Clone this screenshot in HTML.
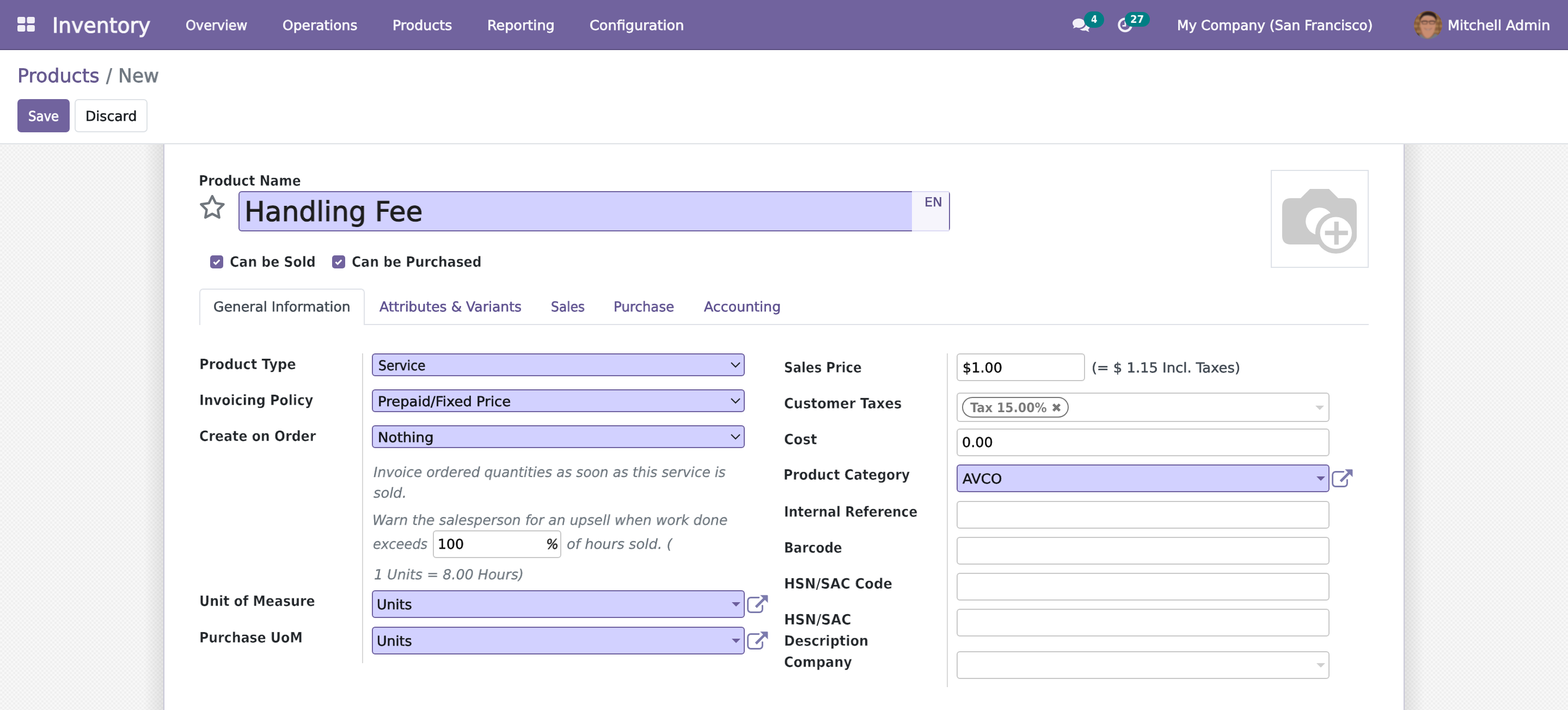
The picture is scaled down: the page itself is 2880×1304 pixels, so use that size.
<!DOCTYPE html>
<html lang="en">
<head>
<meta charset="utf-8">
<title>Odoo - Products / New</title>
<style>
*{box-sizing:border-box;margin:0;padding:0}
html,body{width:2880px;height:1304px;overflow:hidden;background:#fff}
body{font-family:"DejaVu Sans","Liberation Sans",sans-serif;font-size:26px;color:#212529;position:relative}
.a{position:absolute;white-space:pre}
.t{transform-origin:0 0;will-change:transform;text-rendering:geometricPrecision}
svg{position:absolute;overflow:visible}

#nav{left:0;top:0;width:2880px;height:92px;background:#71639e;border-bottom:2px solid #5c5082}
#cp{left:0;top:92px;width:2880px;height:173px;background:#fff;border-bottom:2px solid #dfe2e6}
#bg{left:0;top:265px;width:2880px;height:1039px;background:#f9f9f9;overflow:hidden}
#sheet{left:300px;top:265px;width:2280px;height:1039px;background:#fff;border-left:2px solid #c9c8d8;border-right:2px solid #c9c8d8}
.inp{border:2px solid #c8c8c8;border-radius:6px;background:#fff}
.req{border:2px solid #6f62a0;border-radius:6px;background:#d2d1ff}
.sep{width:2px;background:#d6d6d6}
.cb{width:24px;height:24px;border-radius:5px;background:#71639e}

</style>
</head>
<body>
<div id="nav" class="a"></div>
<div id="cp" class="a"></div>
<div id="bg" class="a"><svg style="left:0;top:0" width="2880" height="1039"><defs><pattern id="chk" width="8" height="8" patternUnits="userSpaceOnUse" x="0" y="1"><rect width="8" height="8" fill="#fcfcfc"/><rect width="4" height="4" fill="#ebebeb"/><rect x="4" y="4" width="4" height="4" fill="#ebebeb"/></pattern><filter id="chb" x="0" y="0" width="100%" height="100%"><feGaussianBlur stdDeviation="0.900"/></filter><linearGradient id="shl" x1="0" x2="1" y1="0" y2="0"><stop offset="0" stop-color="#000" stop-opacity="0"/><stop offset="0.880" stop-color="#000" stop-opacity="0"/><stop offset="1" stop-color="#000" stop-opacity="0.085"/></linearGradient><linearGradient id="shr" x1="1" x2="0" y1="0" y2="0"><stop offset="0" stop-color="#000" stop-opacity="0"/><stop offset="0.880" stop-color="#000" stop-opacity="0"/><stop offset="1" stop-color="#000" stop-opacity="0.085"/></linearGradient></defs><g filter="url(#chb)"><rect x="-8" y="-8" width="316" height="1060" fill="url(#chk)"/><rect x="2572" y="-8" width="316" height="1060" fill="url(#chk)"/></g><rect x="0" y="0" width="300" height="1039" fill="url(#shl)"/><rect x="2580" y="0" width="300" height="1039" fill="url(#shr)"/></svg></div>
<div id="sheet" class="a"></div>
<svg style="left:32px;top:31px" width="32" height="27" viewBox="0 0 32 27"><g fill="#f1eff7"><rect x="0" y="0" width="14.4" height="12" rx="3"/><rect x="17.5" y="0" width="14.4" height="12" rx="3"/><rect x="0" y="15" width="14.4" height="12" rx="3"/><rect x="17.5" y="15" width="14.4" height="12" rx="3"/></g></svg>
<div class="a t" style="left:96.38px;top:23.25px;font-size:38.25px;line-height:50px;color:rgba(255,255,255,.92);transform:scaleX(0.9875);-webkit-text-stroke:1.1px rgba(255,255,255,.92);">Inventory</div>
<div class="a t" style="left:340.72px;top:30.90px;font-size:24.75px;line-height:32px;color:rgba(255,255,255,.92);transform:scaleX(0.9717);-webkit-text-stroke:0.8px rgba(255,255,255,.92);">Overview</div>
<div class="a t" style="left:518.99px;top:30.90px;font-size:24.75px;line-height:32px;color:rgba(255,255,255,.92);transform:scaleX(1.0099);-webkit-text-stroke:0.8px rgba(255,255,255,.92);">Operations</div>
<div class="a t" style="left:720.86px;top:30.90px;font-size:24.75px;line-height:32px;color:rgba(255,255,255,.92);transform:scaleX(1.0232);-webkit-text-stroke:0.8px rgba(255,255,255,.92);">Products</div>
<div class="a t" style="left:894.66px;top:30.90px;font-size:24.75px;line-height:32px;color:rgba(255,255,255,.92);transform:scaleX(1.0280);-webkit-text-stroke:0.8px rgba(255,255,255,.92);">Reporting</div>
<div class="a t" style="left:1082.98px;top:30.90px;font-size:24.75px;line-height:32px;color:rgba(255,255,255,.92);transform:scaleX(1.0334);-webkit-text-stroke:0.8px rgba(255,255,255,.92);">Configuration</div>
<svg style="left:1969.600px;top:34.400px" width="31" height="25" viewBox="0 0 31.500 23.500" preserveAspectRatio="none"><g fill="#f1eff7"><path d="M11.5 0C5.1 0 0 3.6 0 8.1c0 2 1 3.8 2.700 5.200C2.400 14.700 1.700 16 0.600 17c2.300-0.100 4.300-0.900 5.800-1.900 1.500 0.600 3.300 1 5.100 1 6.400 0 11.500-3.600 11.500-8.100S17.900 0 11.500 0z"/><path d="M25.300 9.200c0 4.800-5.300 8.900-12 9.300 1.900 1.500 4.700 2.400 7.700 2.400 1.300 0 2.600-0.200 3.700-0.500 1.700 1.300 4 2.300 6.700 2.600-1.200-1.100-2-2.500-2.400-3.900 1.900-1.300 3-3 3-4.900 0-2.700-2.300-5-5.600-6.200z"/></g></svg>
<div class="a" style="left:1991px;top:21px;width:37px;height:30px;background:#017e84;border-radius:15px"></div>
<div class="a t" style="left:2003.50px;top:23.30px;font-size:19.38px;line-height:25px;color:#fff;transform:scaleX(0.8462);font-weight:bold;">4</div>
<svg style="left:2053px;top:32px" width="28" height="28" viewBox="0 0 28 28"><circle cx="13.6" cy="13.8" r="11.300" fill="none" stroke="#f1eff7" stroke-width="4.200"/><path d="M13.900 7v8.300H8.500" fill="none" stroke="#f1eff7" stroke-width="2.800"/></svg>
<div class="a" style="left:2066px;top:22px;width:46px;height:27px;background:#017e84;border-radius:13.5px"></div>
<div class="a t" style="left:2076.47px;top:23.30px;font-size:19.38px;line-height:25px;color:#fff;transform:scaleX(0.9317);font-weight:bold;">27</div>
<div class="a t" style="left:2161.50px;top:30.90px;font-size:24.75px;line-height:32px;color:rgba(255,255,255,.92);transform:scaleX(1.0018);-webkit-text-stroke:0.8px rgba(255,255,255,.92);">My Company (San Francisco)</div>
<svg style="left:2597px;top:20px" width="52" height="52" viewBox="0 0 52 52"><defs><clipPath id="av"><circle cx="26" cy="26" r="26"/></clipPath><filter id="avb" x="-10%" y="-10%" width="120%" height="120%"><feGaussianBlur stdDeviation="0.800"/></filter></defs><g clip-path="url(#av)"><g filter="url(#avb)"><rect x="-4" y="-4" width="60" height="60" fill="#8a5f3d"/><path d="M-2 8h56M-2 18h56M-2 28h56M-2 38h56" stroke="#a67a4f" stroke-width="4"/><path d="M6 2v10M44 2v10M2 12v10M48 12v10M8 22v10M46 22v10M4 32v10M47 32v10" stroke="#6a4529" stroke-width="1.500"/><path d="M11 20C9 9 16 1 27 1c8 0 14 4 15 11l-1 9-2-7c-7-4-17-4-25-1z" fill="#2a1f1b"/><path d="M13 16c2-5 8-8 13-8s10 2 12 6c3 7 2 17-1 24-2 6-7 12-12 12s-9-5-11-11c-2-7-3-16-1-23z" fill="#c98e72"/><path d="M16 12c3-3 7-4 10-4s8 1 10 4c-3-1-7-2-10-2s-7 1-10 2z" fill="#dcb29a"/><path d="M14 9c5-3 12-4 20-1 2 1 4 3 5 5-8-5-17-5-25-2z" fill="#3a2b25"/><path d="M13 30c1 8 4 16 10 20-5-1-9-5-11-11z" fill="#a1684f"/><path d="M12 19.500h28" stroke="#2e2422" stroke-width="1.300"/><rect x="15" y="18" width="9.500" height="6" rx="2" fill="none" stroke="#2e2422" stroke-width="1.100"/><rect x="28.500" y="18" width="9.500" height="6" rx="2" fill="none" stroke="#2e2422" stroke-width="1.100"/><path d="M19 31.500c4 3 10 3 14 0-3 5-11 5-14 0z" fill="#f4ece8" stroke="#7f4c3e" stroke-width="0.800"/><path d="M4 52c1-5 5-8 10-9 3 5 8 8 12 7 5 0 9-3 12-8 6 1 10 5 11 10z" fill="#727984"/><path d="M0 52V43l8-3 4 12z" fill="#4a3c33"/></g></g></svg>
<div class="a t" style="left:2659.05px;top:30.90px;font-size:24.75px;line-height:32px;color:rgba(255,255,255,.92);transform:scaleX(1.0291);-webkit-text-stroke:0.8px rgba(255,255,255,.92);">Mitchell Admin</div>
<div class="a t" style="left:31.78px;top:118.10px;font-size:34.69px;line-height:45px;color:#66598f;transform:scaleX(1.0058);-webkit-text-stroke:0.8px #66598f;">Products</div>
<div class="a t" style="left:194.97px;top:118.10px;font-size:34.69px;line-height:45px;color:#6f7780;transform:scaleX(0.9141);-webkit-text-stroke:0.8px #6f7780;">/</div>
<div class="a t" style="left:217.22px;top:118.10px;font-size:34.69px;line-height:45px;color:#6f7780;transform:scaleX(0.9921);-webkit-text-stroke:0.8px #6f7780;">New</div>
<div class="a" style="left:32px;top:182px;width:96px;height:61px;background:#71639e;border-radius:7px"></div>
<div class="a t" style="left:52.25px;top:198.20px;font-size:24.75px;line-height:32px;color:#fff;transform:scaleX(0.9221);-webkit-text-stroke:0.8px #fff;">Save</div>
<div class="a" style="left:137px;top:182px;width:134px;height:61px;background:#fff;border:2px solid #dee2e6;border-radius:7px"></div>
<div class="a t" style="left:156.59px;top:197.30px;font-size:25.02px;line-height:33px;color:#1b1f23;transform:scaleX(1.0036);-webkit-text-stroke:0.6px #1b1f23;">Discard</div>
<div class="a t" style="left:365.34px;top:316.20px;font-size:26.39px;line-height:34px;color:#212529;transform:scaleX(0.8902);font-weight:bold;-webkit-text-stroke:0.4px #fff;">Product Name</div>
<svg style="left:365.200px;top:355.400px" width="49.800" height="48.600" viewBox="0 0 48 46"><path d="M24 4.600l6.100 12.500 13.800 2-10 9.700 2.400 13.700L24 36l-12.300 6.500 2.400-13.700-10-9.700 13.800-2z" fill="none" stroke="#70767d" stroke-width="4.200" stroke-linejoin="round"/></svg>
<div class="a req" style="left:438px;top:351px;width:1307px;height:74px"></div><div class="a" style="left:1675px;top:351px;width:68px;height:74px;background:#f6f5fc;border-top:2px solid #dddbf4;border-bottom:2px solid #dddbf4"></div>
<div class="a t" style="left:449.01px;top:356.30px;font-size:50.31px;line-height:65px;color:#1e1e1e;transform:scaleX(0.9975);-webkit-text-stroke:1.0px #1e1e1e;">Handling Fee</div>
<div class="a t" style="left:1698.22px;top:357.33px;font-size:23.1px;line-height:30px;color:#5c5088;transform:scaleX(1.0329);-webkit-text-stroke:0.55px #5c5088;">EN</div>
<div class="a cb" style="left:386px;top:469px"></div><svg style="left:386px;top:469px" width="24" height="24" viewBox="0 0 24 24"><path d="M6.500 12.300l3.600 3.600 7.200-7.400" fill="none" stroke="#fff" stroke-width="3"/></svg>
<div class="a t" style="left:422.13px;top:465.00px;font-size:26.39px;line-height:34px;color:#212529;transform:scaleX(0.8957);font-weight:bold;-webkit-text-stroke:0.4px #fff;">Can be Sold</div>
<div class="a cb" style="left:610px;top:469px"></div><svg style="left:610px;top:469px" width="24" height="24" viewBox="0 0 24 24"><path d="M6.500 12.300l3.600 3.600 7.200-7.400" fill="none" stroke="#fff" stroke-width="3"/></svg>
<div class="a t" style="left:645.83px;top:465.00px;font-size:26.39px;line-height:34px;color:#212529;transform:scaleX(0.8939);font-weight:bold;-webkit-text-stroke:0.4px #fff;">Can be Purchased</div>
<div class="a" style="left:2334px;top:312px;width:180px;height:180px;border:2px solid #dee2e8;background:#fff"></div>
<svg style="left:2334px;top:312px" width="180" height="180" viewBox="0 0 180 180"><path d="M37 52h18l17-17h35l17 17h18q16 0 16 16v53q0 16-16 16H37q-16 0-16-16V68q0-16 16-16z" fill="#cbcbcb"/><circle cx="89.400" cy="94.400" r="25.200" fill="#fff"/><circle cx="119.800" cy="115.800" r="38" fill="#cbcbcb"/><circle cx="119.800" cy="115.800" r="29.200" fill="#fff"/><rect x="99.600" y="111.700" width="42.200" height="8.200" fill="#cbcbcb"/><rect x="116.600" y="95" width="8.200" height="42.300" fill="#cbcbcb"/></svg>
<div class="a" style="left:367px;top:595px;width:2147px;height:2px;background:#dfe2e8"></div>
<div class="a" style="left:366px;top:530px;width:304px;height:67px;border:2px solid #dfe2e8;border-bottom:0;border-radius:7px 7px 0 0;background:#fff"></div>
<div class="a t" style="left:392.30px;top:547.40px;font-size:25.02px;line-height:33px;color:#434b54;transform:scaleX(1.0013);-webkit-text-stroke:0.6px #434b54;">General Information</div>
<div class="a t" style="left:697.40px;top:547.40px;font-size:25.02px;line-height:33px;color:#5f5290;transform:scaleX(1.0014);-webkit-text-stroke:0.6px #5f5290;">Attributes &amp; Variants</div>
<div class="a t" style="left:1011.95px;top:547.40px;font-size:25.02px;line-height:33px;color:#5f5290;transform:scaleX(0.9317);-webkit-text-stroke:0.6px #5f5290;">Sales</div>
<div class="a t" style="left:1127.04px;top:547.40px;font-size:25.02px;line-height:33px;color:#5f5290;transform:scaleX(0.9785);-webkit-text-stroke:0.6px #5f5290;">Purchase</div>
<div class="a t" style="left:1292.60px;top:547.40px;font-size:25.02px;line-height:33px;color:#5f5290;transform:scaleX(1.0108);-webkit-text-stroke:0.6px #5f5290;">Accounting</div>
<div class="a" style="left:665px;top:649px;width:2px;height:569px;background:#d8d8d8"></div>
<div class="a t" style="left:365.59px;top:653.20px;font-size:26.39px;line-height:34px;color:#212529;transform:scaleX(0.9138);font-weight:bold;-webkit-text-stroke:0.4px #fff;">Product Type</div>
<div class="a t" style="left:365.62px;top:719.20px;font-size:26.39px;line-height:34px;color:#212529;transform:scaleX(0.8996);font-weight:bold;-webkit-text-stroke:0.4px #fff;">Invoicing Policy</div>
<div class="a t" style="left:366.22px;top:785.20px;font-size:26.39px;line-height:34px;color:#212529;transform:scaleX(0.8969);font-weight:bold;-webkit-text-stroke:0.4px #fff;">Create on Order</div>
<div class="a t" style="left:365.93px;top:1087.80px;font-size:26.39px;line-height:34px;color:#212529;transform:scaleX(0.8964);font-weight:bold;-webkit-text-stroke:0.4px #fff;">Unit of Measure</div>
<div class="a t" style="left:365.63px;top:1154.80px;font-size:26.39px;line-height:34px;color:#212529;transform:scaleX(0.8956);font-weight:bold;-webkit-text-stroke:0.4px #fff;">Purchase UoM</div>
<div class="a req" style="left:683px;top:649px;width:685px;height:42px"></div>
<svg style="left:1342px;top:665px" width="18" height="10" viewBox="0 0 18 10"><path d="M1 1l8 8 8-8" fill="none" stroke="#212529" stroke-width="2.200"/></svg>
<div class="a t" style="left:695.24px;top:654.50px;font-size:25.02px;line-height:33px;color:#16181b;transform:scaleX(0.9360);-webkit-text-stroke:0.6px #16181b;">Service</div>
<div class="a req" style="left:683px;top:715px;width:685px;height:42px"></div>
<svg style="left:1342px;top:731px" width="18" height="10" viewBox="0 0 18 10"><path d="M1 1l8 8 8-8" fill="none" stroke="#212529" stroke-width="2.200"/></svg>
<div class="a t" style="left:694.14px;top:720.50px;font-size:25.02px;line-height:33px;color:#16181b;transform:scaleX(1.0348);-webkit-text-stroke:0.6px #16181b;">Prepaid/Fixed Price</div>
<div class="a req" style="left:683px;top:781px;width:685px;height:42px"></div>
<svg style="left:1342px;top:797px" width="18" height="10" viewBox="0 0 18 10"><path d="M1 1l8 8 8-8" fill="none" stroke="#212529" stroke-width="2.200"/></svg>
<div class="a t" style="left:694.13px;top:786.50px;font-size:25.02px;line-height:33px;color:#16181b;transform:scaleX(1.0412);-webkit-text-stroke:0.6px #16181b;">Nothing</div>
<div class="a t" style="left:685.82px;top:851.58px;font-size:25.5px;line-height:33px;color:#6c757d;transform:scaleX(0.9794);font-style:italic;-webkit-text-stroke:0.25px #6c757d;">Invoice ordered quantities as soon as this service is</div>
<div class="a t" style="left:685.83px;top:890.08px;font-size:25.5px;line-height:33px;color:#6c757d;transform:scaleX(1.0103);font-style:italic;-webkit-text-stroke:0.25px #6c757d;">sold.</div>
<div class="a t" style="left:683.85px;top:939.88px;font-size:25.5px;line-height:33px;color:#6c757d;transform:scaleX(0.9859);font-style:italic;-webkit-text-stroke:0.25px #6c757d;">Warn the salesperson for an upsell when work done</div>
<div class="a t" style="left:684.87px;top:984.27px;font-size:25.5px;line-height:33px;color:#6c757d;transform:scaleX(0.9492);font-style:italic;-webkit-text-stroke:0.25px #6c757d;">exceeds</div>
<div class="a inp" style="left:794.500px;top:974px;width:236px;height:51px"></div>
<div class="a t" style="left:804.09px;top:983.10px;font-size:25.02px;line-height:33px;color:#111;transform:scaleX(1.0059);-webkit-text-stroke:0.6px #111;">100</div>
<div class="a t" style="left:1003.07px;top:983.10px;font-size:25.02px;line-height:33px;color:#222;transform:scaleX(0.9612);font-style:italic;-webkit-text-stroke:0.6px #222;">%</div>
<div class="a t" style="left:1040.81px;top:984.27px;font-size:25.5px;line-height:33px;color:#6c757d;transform:scaleX(1.0141);font-style:italic;-webkit-text-stroke:0.25px #6c757d;">of hours sold. (</div>
<div class="a t" style="left:686.53px;top:1039.58px;font-size:25.5px;line-height:33px;color:#6c757d;transform:scaleX(0.9933);font-style:italic;-webkit-text-stroke:0.25px #6c757d;">1 Units = 8.00 Hours)</div>
<div class="a req" style="left:683px;top:1084px;width:685px;height:51px"></div>
<svg style="left:1344px;top:1106px" width="16" height="8" viewBox="0 0 16 8"><path d="M0 0h16l-8 8z" fill="#6c5e9c"/></svg>
<svg style="left:1372px;top:1093px" width="39" height="33" viewBox="0 0 39 33"><path d="M21.800 4.500H7.100a5.500 5.500 0 0 0-5.500 5.500V26a5.500 5.500 0 0 0 5.500 5.500H22.900a5.500 5.500 0 0 0 5.500-5.500V19.400" fill="none" stroke="#7c7bad" stroke-width="2.900" stroke-linecap="round"/><path d="M16.400 22L32.500 5.900" fill="none" stroke="#7c7bad" stroke-width="4.700"/><path d="M24.800 0.300H37.300a0.800 0.800 0 0 1 0.800 0.800V13.600L31.500 7z" fill="#7c7bad" stroke="#7c7bad" stroke-width="0.600" stroke-linejoin="round"/></svg>
<div class="a t" style="left:692.08px;top:1093.50px;font-size:25.02px;line-height:33px;color:#16181b;transform:scaleX(1.0110);-webkit-text-stroke:0.6px #16181b;">Units</div>
<div class="a req" style="left:683px;top:1151px;width:685px;height:51px"></div>
<svg style="left:1344px;top:1173px" width="16" height="8" viewBox="0 0 16 8"><path d="M0 0h16l-8 8z" fill="#6c5e9c"/></svg>
<svg style="left:1372px;top:1160px" width="39" height="33" viewBox="0 0 39 33"><path d="M21.800 4.500H7.100a5.500 5.500 0 0 0-5.500 5.500V26a5.500 5.500 0 0 0 5.500 5.500H22.900a5.500 5.500 0 0 0 5.500-5.500V19.400" fill="none" stroke="#7c7bad" stroke-width="2.900" stroke-linecap="round"/><path d="M16.400 22L32.500 5.900" fill="none" stroke="#7c7bad" stroke-width="4.700"/><path d="M24.800 0.300H37.300a0.800 0.800 0 0 1 0.800 0.800V13.600L31.500 7z" fill="#7c7bad" stroke="#7c7bad" stroke-width="0.600" stroke-linejoin="round"/></svg>
<div class="a t" style="left:692.08px;top:1160.50px;font-size:25.02px;line-height:33px;color:#16181b;transform:scaleX(1.0110);-webkit-text-stroke:0.6px #16181b;">Units</div>
<div class="a" style="left:1739px;top:649px;width:2px;height:613px;background:#d8d8d8"></div>
<div class="a t" style="left:1439.65px;top:659.20px;font-size:26.39px;line-height:34px;color:#212529;transform:scaleX(0.8734);font-weight:bold;-webkit-text-stroke:0.4px #fff;">Sales Price</div>
<div class="a t" style="left:1439.60px;top:725.20px;font-size:26.39px;line-height:34px;color:#212529;transform:scaleX(0.9201);font-weight:bold;-webkit-text-stroke:0.4px #fff;">Customer Taxes</div>
<div class="a t" style="left:1439.60px;top:791.20px;font-size:26.39px;line-height:34px;color:#212529;transform:scaleX(0.9204);font-weight:bold;-webkit-text-stroke:0.4px #fff;">Cost</div>
<div class="a t" style="left:1439.14px;top:856.40px;font-size:26.39px;line-height:34px;color:#212529;transform:scaleX(0.8914);font-weight:bold;-webkit-text-stroke:0.4px #fff;">Product Category</div>
<div class="a t" style="left:1439.56px;top:924.20px;font-size:26.39px;line-height:34px;color:#212529;transform:scaleX(0.8832);font-weight:bold;-webkit-text-stroke:0.4px #fff;">Internal Reference</div>
<div class="a t" style="left:1439.77px;top:990.20px;font-size:26.39px;line-height:34px;color:#212529;transform:scaleX(0.8786);font-weight:bold;-webkit-text-stroke:0.4px #fff;">Barcode</div>
<div class="a t" style="left:1439.66px;top:1055.80px;font-size:26.39px;line-height:34px;color:#212529;transform:scaleX(0.9259);font-weight:bold;-webkit-text-stroke:0.4px #fff;">HSN/SAC Code</div>
<div class="a t" style="left:1439.63px;top:1121.60px;font-size:26.39px;line-height:34px;color:#212529;transform:scaleX(0.9391);font-weight:bold;-webkit-text-stroke:0.4px #fff;">HSN/SAC</div>
<div class="a t" style="left:1439.70px;top:1161.20px;font-size:26.39px;line-height:34px;color:#212529;transform:scaleX(0.9092);font-weight:bold;-webkit-text-stroke:0.4px #fff;">Description</div>
<div class="a t" style="left:1440.21px;top:1199.70px;font-size:26.39px;line-height:34px;color:#212529;transform:scaleX(0.9073);font-weight:bold;-webkit-text-stroke:0.4px #fff;">Company</div>
<div class="a inp" style="left:1757px;top:649px;width:236px;height:51px"></div>
<div class="a t" style="left:1767.57px;top:659.40px;font-size:25.02px;line-height:33px;color:#111;transform:scaleX(1.0188);-webkit-text-stroke:0.6px #111;">$1.00</div>
<div class="a t" style="left:2005.25px;top:659.00px;font-size:25.02px;line-height:33px;color:#434b54;transform:scaleX(1.0311);-webkit-text-stroke:0.6px #434b54;">(= $ 1.15 Incl. Taxes)</div>
<div class="a inp" style="left:1757px;top:721px;width:685px;height:54px"></div>
<div class="a" style="left:1767px;top:729px;width:196px;height:38px;border:2px solid #777;border-radius:19px;background:#fff"></div>
<div class="a t" style="left:1781.55px;top:733.55px;font-size:23.99px;line-height:31px;color:#777;transform:scaleX(0.9174);font-weight:bold;-webkit-text-stroke:0.1px #fff;">Tax 15.00%</div>
<svg style="left:1931.500px;top:739.500px" width="17" height="17" viewBox="0 0 17 17"><path d="M2.600 2.600l11.800 11.800M14.400 2.600L2.600 14.400" stroke="#777" stroke-width="4.800" fill="none"/></svg>
<svg style="left:2416px;top:745px" width="16" height="8" viewBox="0 0 16 8"><path d="M0 0h16l-8 8z" fill="#cfcfcf"/></svg>
<div class="a inp" style="left:1757px;top:787px;width:685px;height:51px"></div>
<div class="a t" style="left:1767.49px;top:796.30px;font-size:25.02px;line-height:33px;color:#111;transform:scaleX(1.0187);-webkit-text-stroke:0.6px #111;">0.00</div>
<div class="a req" style="left:1757px;top:853px;width:685px;height:51px"></div>
<div class="a t" style="left:1767.61px;top:862.90px;font-size:25.02px;line-height:33px;color:#16181b;transform:scaleX(1.0374);-webkit-text-stroke:0.6px #16181b;">AVCO</div>
<svg style="left:2418px;top:875px" width="16" height="8" viewBox="0 0 16 8"><path d="M0 0h16l-8 8z" fill="#6c5e9c"/></svg>
<svg style="left:2445.8px;top:862px" width="39" height="33" viewBox="0 0 39 33"><path d="M21.800 4.500H7.100a5.500 5.500 0 0 0-5.500 5.500V26a5.500 5.500 0 0 0 5.500 5.500H22.900a5.500 5.500 0 0 0 5.500-5.500V19.400" fill="none" stroke="#7c7bad" stroke-width="2.900" stroke-linecap="round"/><path d="M16.400 22L32.500 5.900" fill="none" stroke="#7c7bad" stroke-width="4.700"/><path d="M24.800 0.300H37.300a0.800 0.800 0 0 1 0.800 0.800V13.600L31.500 7z" fill="#7c7bad" stroke="#7c7bad" stroke-width="0.600" stroke-linejoin="round"/></svg>
<div class="a inp" style="left:1757px;top:920px;width:685px;height:51px"></div>
<div class="a inp" style="left:1757px;top:986px;width:685px;height:51px"></div>
<div class="a inp" style="left:1757px;top:1052px;width:685px;height:51px"></div>
<div class="a inp" style="left:1757px;top:1118px;width:685px;height:51px"></div>
<div class="a inp" style="left:1757px;top:1196px;width:685px;height:51px"></div>
<svg style="left:2418px;top:1218px" width="16" height="8" viewBox="0 0 16 8"><path d="M0 0h16l-8 8z" fill="#cfcfcf"/></svg>
<script>(function(){var w=window.innerWidth;if(w&&Math.abs(w-2880)>1){document.documentElement.style.zoom=w/2880;}})();</script>
</body>
</html>
